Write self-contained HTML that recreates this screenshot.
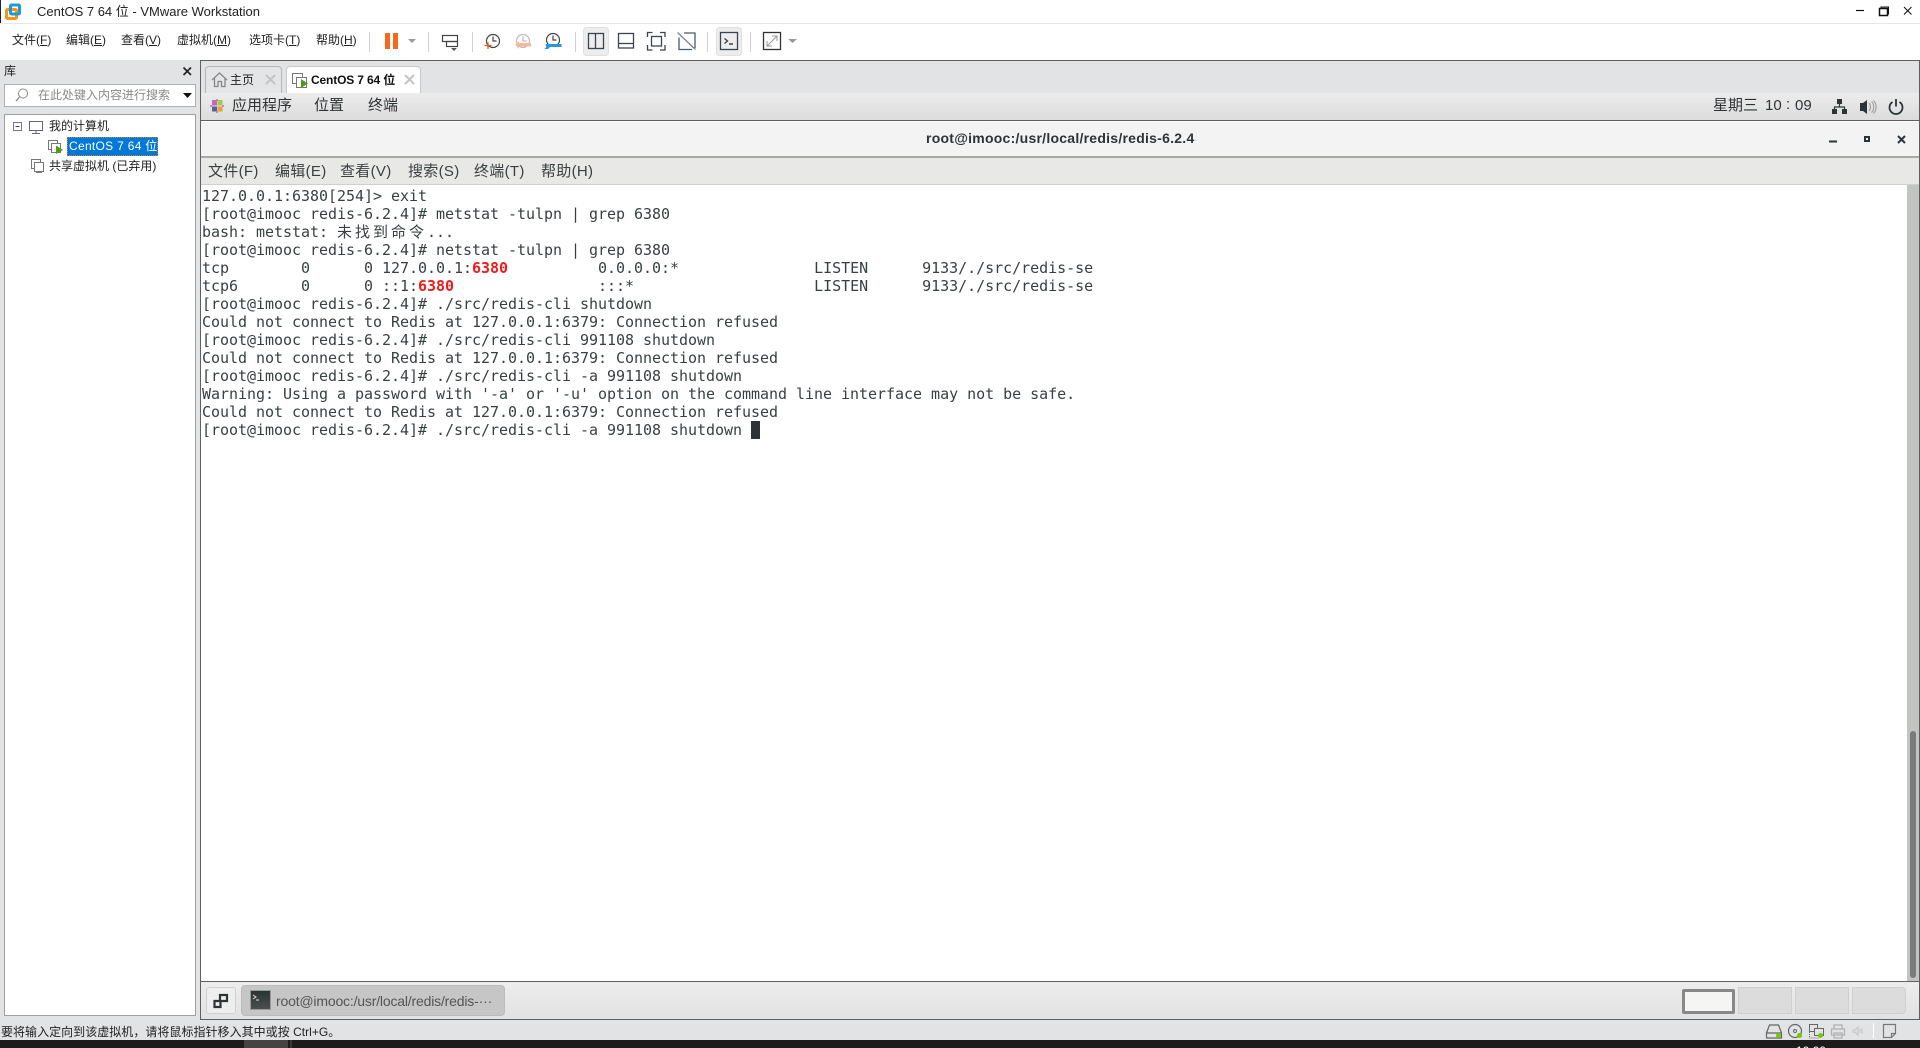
<!DOCTYPE html>
<html><head><meta charset="utf-8"><style>
*{box-sizing:border-box;margin:0;padding:0}
html,body{width:1920px;height:1048px;overflow:hidden;background:#e2e3e5}
body{position:relative;font-family:"Liberation Sans","Noto Sans CJK SC",sans-serif;color:#222}
.a{position:absolute}
.t{position:absolute;white-space:pre;line-height:18px}
.m{font-size:12px;color:#222;top:31px}
.m u{text-decoration:underline}
.g{font-size:15px;color:#2e3436}
.gm{font-size:15px;color:#3a3f41;top:163px;letter-spacing:.3px}
.sep{position:absolute;width:1px;background:#d0d0d0;top:32px;height:20px}
svg{position:absolute;overflow:visible}
#term{position:absolute;left:202px;top:187px;font:15px/18px "DejaVu Sans Mono","Noto Sans CJK SC",monospace;letter-spacing:-.03px;color:#3a4042;white-space:pre}
#term b{color:#f01c1c}
#term i{font-style:normal;letter-spacing:3px}
</style></head><body>
<!-- title bar -->
<div class="a" style="left:0;top:0;width:1920px;height:60px;background:#fff"></div>
<div class="a" style="left:0;top:23px;width:1920px;height:1px;background:#e6e6e6"></div>
<div class="a" style="left:0;top:0;width:1px;height:23px;background:#222"></div>
<svg style="left:0;top:0" width="24" height="24"><rect x="6.500" y="9.500" width="10" height="9" fill="none" stroke="#f7941d" stroke-width="3" rx="1"/><rect x="10.500" y="5" width="9" height="9" fill="none" stroke="#1e9bd7" stroke-width="3" rx="1"/></svg>
<div class="t" style="left:37px;top:3px;font-size:13px;color:#222">CentOS 7 64 位 - VMware Workstation</div>
<svg style="left:1850px;top:0" width="70" height="24" fill="none" stroke="#111"><path d="M6 10.500h8" stroke-width="1.200"/><rect x="29.500" y="8.500" width="8" height="7" stroke-width="1.500"/><path d="M31 8v-1h7.500v7h-1" stroke-width="1"/><path d="M54 7l7.500 7.500M61.500 7L54 14.500" stroke-width="1"/></svg>
<!-- menus -->
<div class="t m" style="left:12px">文件(<u>F</u>)</div>
<div class="t m" style="left:66px">编辑(<u>E</u>)</div>
<div class="t m" style="left:121px">查看(<u>V</u>)</div>
<div class="t m" style="left:177px">虚拟机(<u>M</u>)</div>
<div class="t m" style="left:249px">选项卡(<u>T</u>)</div>
<div class="t m" style="left:316px">帮助(<u>H</u>)</div>
<div class="sep" style="left:369px"></div><div class="sep" style="left:428px"></div><div class="sep" style="left:472px"></div><div class="sep" style="left:575px"></div><div class="sep" style="left:707px"></div><div class="sep" style="left:750px"></div>
<div class="a" style="left:385px;top:33px;width:5px;height:16px;background:#f4691f"></div>
<div class="a" style="left:393px;top:33px;width:5px;height:16px;background:#f4691f"></div>
<svg style="left:0;top:0" width="1000" height="60" fill="none">
<path d="M408 39h8l-4 4z" fill="#999"/><path d="M788 39h9l-4.500 4z" fill="#999"/>
<g stroke="#444" stroke-width="1.200"><rect x="442.500" y="35.500" width="15" height="6"/><rect x="446.500" y="41.500" width="11" height="5"/></g><path d="M451 48h6l-3 3z" fill="#555"/>
<g stroke="#444" stroke-width="1.200"><circle cx="493" cy="41" r="6.500"/><path d="M493 36.500v4.500h3.500"/></g><path d="M488 42.500v6.500M484.500 45.500h7" stroke="#f0541e" stroke-width="1.300"/>
<g stroke="#bbb" stroke-width="1.200"><circle cx="523" cy="41" r="6.500"/><path d="M523 36.500v4.500h3.500"/></g><path d="M519 43h12v3.500h-12l0 2.500-3.500-4 3.500-4z" fill="#fbb797"/>
<g stroke="#444" stroke-width="1.200"><circle cx="553" cy="40" r="6.500"/><path d="M553 35.500v4.500h3.500"/></g><path d="M546 44h15.500v3h-11.500l-2 2h-3.500l2-2.500-1-1z" fill="#2597dd"/>
<rect x="583.500" y="27.500" width="25" height="28" rx="3" fill="#ededed" stroke="#e0e0e0"/>
<rect x="716.500" y="27.500" width="25" height="28" rx="3" fill="#ededed" stroke="#e0e0e0"/>
<g stroke="#3c4450" stroke-width="1.300"><rect x="588.500" y="33.500" width="15" height="15"/><path d="M595.500 33v16"/><rect x="618.500" y="33.500" width="15" height="14.500"/><path d="M618 43.500h16"/>
<path d="M647.500 37v-4.500h5M660 32.500h5v4.500M665 45v5h-5M652.500 50h-5v-5"/><rect x="651.500" y="36.500" width="10" height="9.500"/>
<path d="M684 33h11v15M692 49.500h-13v-12" stroke="#4a5a6a"/><path d="M677.500 32.500l18 17" stroke="#7a8490"/>
<rect x="720.500" y="32.500" width="17" height="17"/><path d="M724.500 38.500l3 2.500-3 2.500M729 44h4" stroke-width="1.400"/>
<rect x="763.500" y="32.500" width="17" height="17" stroke="#333"/></g>
<path d="M767 46l10-10M772 36h5v5M767 41v5h5" stroke="#999" stroke-width="1"/>
</svg>
<!-- left panel -->
<div class="t" style="left:4px;top:62px;font-size:12px;color:#222">库</div>
<svg style="left:182px;top:66px" width="12" height="12"><path d="M1.500 1.500l7.500 7.500M9 1.500L1.500 9" stroke="#222" stroke-width="1.600" fill="none"/></svg>
<div class="a" style="left:4px;top:84px;width:192px;height:23px;background:#fff;border:1px solid #b0b0b0"></div>
<svg style="left:14px;top:87px" width="16" height="16" fill="none"><circle cx="9" cy="6.500" r="4.500" stroke="#888"/><path d="M5.500 10L2 14" stroke="#888" stroke-width="1.300"/></svg>
<div class="t" style="left:38px;top:86px;font-size:12px;color:#8a8a8a">在此处键入内容进行搜索</div>
<svg style="left:183px;top:93px" width="9" height="6"><path d="M0 0h9l-4.500 5z" fill="#111"/></svg>
<div class="a" style="left:4px;top:114px;width:192px;height:902px;background:#fff;border:1px solid #a0a0a0"></div>
<svg style="left:0;top:110px" width="70" height="70" fill="none">
<rect x="13.500" y="12.500" width="8" height="8" stroke="#778"/><path d="M15.500 16.500h4" stroke="#445"/>
<rect x="29.500" y="11.500" width="13" height="9" stroke="#667"/><path d="M32 23.500h8M36 20.500v3" stroke="#667"/>
<rect x="48.500" y="30.500" width="9" height="9" stroke="#777"/><rect x="51.500" y="33.500" width="9" height="9" fill="#fff" stroke="#777"/><path d="M56 35.500l7 4.500-7 4z" fill="#4f9e12"/>
<rect x="31.500" y="49.500" width="9" height="9" stroke="#777"/><rect x="34.500" y="52.500" width="9" height="9" fill="#fff" stroke="#777"/><path d="M36 62.500h6" stroke="#777"/>
</svg>
<div class="t" style="left:49px;top:117px;font-size:12px;color:#222">我的计算机</div>
<div class="a" style="left:67px;top:137px;width:91px;height:19px;background:#0078d7;border:1px dotted #d08030"></div>
<div class="t" style="left:69px;top:137px;font-size:12px;letter-spacing:.3px;color:#fff">CentOS 7 64 位</div>
<div class="t" style="left:49px;top:157px;font-size:12px;color:#222">共享虚拟机 (已弃用)</div>
<!-- right panel -->
<div class="a" style="left:200px;top:60px;width:1720px;height:960px;background:#e2e3e5;border:1px solid #5f5f5f"></div>
<!-- tabs -->
<div class="a" style="left:205px;top:66px;width:77px;height:27px;background:#e4e5e7;border:1px solid #b5b5b5;border-bottom:0;border-radius:4px 4px 0 0"></div>
<div class="a" style="left:286px;top:66px;width:135px;height:28px;background:#fff;border:1px solid #c8c8c8;border-bottom:0;border-radius:4px 4px 0 0"></div>
<svg style="left:205px;top:66px" width="230" height="28" fill="none">
<path d="M7 14l7.500-7 7.500 7M9.500 12v8.500h3.500v-5h3.500v5h3.500v-8.500" stroke="#888" stroke-width="1.300"/>
<path d="M61 9l9 9M70 9l-9 9" stroke="#c4c4c4" stroke-width="2"/>
<rect x="87.500" y="7.500" width="10" height="10" stroke="#777"/><rect x="91.500" y="11.500" width="10" height="10" fill="#fff" stroke="#777"/><path d="M96 13l7 4.500-7 4.500z" fill="#4f9e12"/>
<path d="M200 9l9 9M209 9l-9 9" stroke="#c4c4c4" stroke-width="2"/>
</svg>
<div class="t" style="left:230px;top:71px;font-size:12px;color:#222">主页</div>
<div class="t" style="left:311px;top:71px;font-size:12px;font-weight:bold;color:#111;letter-spacing:-.15px">CentOS 7 64 位</div>
<!-- gnome panel -->
<div class="a" style="left:201px;top:93px;width:1718px;height:27px;background:linear-gradient(#ececec,#dcdcdc)"></div>
<div class="a" style="left:201px;top:120px;width:1718px;height:1px;background:#5f5f5f"></div>
<svg style="left:209px;top:98px" width="16" height="16"><rect x="3" y="2" width="5" height="5.500" fill="#c66ab0"/><rect x="8.500" y="2" width="5" height="5.500" fill="#a8c850"/><rect x="3" y="8.500" width="5" height="5" fill="#5b5aa8"/><rect x="8.500" y="8.500" width="5" height="5" fill="#e8a030"/><path d="M8 1v2M8 13v2M1 8h2M13 8h2" stroke="#b07ab0" stroke-width="1.500"/></svg>
<div class="t g" style="left:232px;top:97px">应用程序</div>
<div class="t g" style="left:314px;top:97px">位置</div>
<div class="t g" style="left:368px;top:97px">终端</div>
<div class="t g" style="left:1713px;top:97px">星期三</div>
<div class="t g" style="left:1765px;top:97px">10</div>
<div class="t g" style="left:1786px;top:96px">:</div>
<div class="t g" style="left:1795px;top:97px">09</div>
<svg style="left:1830px;top:97px" width="80" height="20" fill="none"><path d="M2 17h5v-5H2zM12 17h5v-5h-5zM7 7h5V2H7z" fill="#2e3436"/><path d="M9.500 7v3M4.500 12v-2h10v2" stroke="#2e3436" stroke-width="1.200"/>
<path d="M30 6h3l4-3v14l-4-3h-3z" fill="#2e3436"/><path d="M39 6c2 2 2 6 0 8M41.500 4.500c3 3 3 8 0 11M43.500 3.500c3.500 4 3.500 9 0 13" stroke="#a0a2a2" stroke-width="1.200"/>
<path d="M62.500 5a6.500 6.500 0 1 0 7 0M66 2v7.500" stroke="#2e3436" stroke-width="1.800"/></svg>
<!-- title bar gnome -->
<div class="a" style="left:201px;top:121px;width:1718px;height:36px;background:#f3f3f3;border-top:1px solid #fff"></div>
<div class="a" style="left:201px;top:156px;width:1718px;height:2px;background:#a8a8a6"></div>
<div class="t" style="left:926px;top:129px;font-size:14px;font-weight:bold;color:#2e3436;letter-spacing:.25px">root@imooc:/usr/local/redis/redis-6.2.4</div>
<svg style="left:1825px;top:130px" width="90" height="20" fill="none"><path d="M4 11.500h8" stroke="#2e3436" stroke-width="2"/><rect x="40" y="7" width="4" height="4" stroke="#2e3436" stroke-width="2"/><path d="M73 6l7 7M80 6l-7 7" stroke="#2e3436" stroke-width="2"/></svg>
<!-- gnome terminal menu -->
<div class="a" style="left:201px;top:158px;width:1718px;height:27px;background:#e8e8e6"></div>
<div class="a" style="left:201px;top:184px;width:1718px;height:1px;background:#cfcfcd"></div>
<div class="t gm" style="left:208px">文件(F)</div>
<div class="t gm" style="left:275px">编辑(E)</div>
<div class="t gm" style="left:340px">查看(V)</div>
<div class="t gm" style="left:408px">搜索(S)</div>
<div class="t gm" style="left:474px">终端(T)</div>
<div class="t gm" style="left:541px">帮助(H)</div>
<!-- terminal -->
<div class="a" style="left:201px;top:185px;width:1718px;height:796px;background:#fff"></div>
<div id="term">127.0.0.1:6380[254]&gt; exit
[root@imooc redis-6.2.4]# metstat -tulpn | grep 6380
bash: metstat: <i>未找到命令</i>...
[root@imooc redis-6.2.4]# netstat -tulpn | grep 6380
tcp        0      0 127.0.0.1:<b>6380</b>          0.0.0.0:*               LISTEN      9133/./src/redis-se
tcp6       0      0 ::1:<b>6380</b>                :::*                    LISTEN      9133/./src/redis-se
[root@imooc redis-6.2.4]# ./src/redis-cli shutdown
Could not connect to Redis at 127.0.0.1:6379: Connection refused
[root@imooc redis-6.2.4]# ./src/redis-cli 991108 shutdown
Could not connect to Redis at 127.0.0.1:6379: Connection refused
[root@imooc redis-6.2.4]# ./src/redis-cli -a 991108 shutdown
Warning: Using a password with '-a' or '-u' option on the command line interface may not be safe.
Could not connect to Redis at 127.0.0.1:6379: Connection refused
[root@imooc redis-6.2.4]# ./src/redis-cli -a 991108 shutdown </div>
<div class="a" style="left:751px;top:421px;width:9px;height:18px;background:#2e3436"></div>
<div class="a" style="left:1907px;top:185px;width:12px;height:796px;background:#c2c4c2"></div>
<div class="a" style="left:1910px;top:731px;width:6px;height:247px;background:#7a7c7c;border-radius:3px"></div>
<!-- bottom panel -->
<div class="a" style="left:201px;top:981px;width:1718px;height:1px;background:#5f5f5f"></div>
<div class="a" style="left:201px;top:982px;width:1718px;height:37px;background:linear-gradient(#ededed,#e2e2e2)"></div>
<div class="a" style="left:206px;top:987px;width:30px;height:27px;background:#eee;border:1px solid #d0d0d0;border-radius:3px"></div>
<svg style="left:214px;top:993px" width="14" height="16"><path d="M0.500 14V8h6v6z M6 2h7v6H6z" fill="none" stroke="#2e3436" stroke-width="2.200"/></svg>
<div class="a" style="left:241px;top:985px;width:264px;height:31px;background:#c6c6c6;border:1px solid #bcbcbc;border-radius:4px"></div>
<div class="a" style="left:250px;top:990px;width:21px;height:20px;background:linear-gradient(#2c3333,#4a5050);border:1px solid #999"></div>
<svg style="left:253px;top:995px" width="10" height="8"><path d="M0 0l3 2-3 2M3 5h3" stroke="#ddd" fill="none"/></svg>
<div class="t" style="left:276px;top:992px;font-size:14px;color:#555;letter-spacing:-.18px">root@imooc:/usr/local/redis/redis-···</div>
<div class="a" style="left:1682px;top:989px;width:53px;height:25px;background:#f5f5f3;border:3px solid #888;border-radius:2px"></div>
<div class="a" style="left:1738px;top:987px;width:54px;height:27px;background:#dcdcdc;border:1px solid #d0d0d0"></div>
<div class="a" style="left:1795px;top:987px;width:54px;height:27px;background:#dcdcdc;border:1px solid #d0d0d0"></div>
<div class="a" style="left:1852px;top:987px;width:54px;height:27px;background:#dcdcdc;border:1px solid #d0d0d0;border-radius:0 4px 4px 0"></div>
<div class="a" style="left:200px;top:1019px;width:1720px;height:1px;background:#5f5f5f"></div>
<!-- status bar -->
<div class="t" style="left:1px;top:1023px;font-size:12px;color:#222;letter-spacing:.03px">要将输入定向到该虚拟机，请将鼠标指针移入其中或按 Ctrl+G。</div>
<svg style="left:1760px;top:1020px" width="160" height="20" fill="none">
<path d="M6.500 13l3-8h9l3 8v5h-15zM7 13h14" stroke="#666" stroke-width="1.200"/><circle cx="18.500" cy="15.500" r="2.500" fill="#78c800"/>
<circle cx="35" cy="11" r="6.500" stroke="#666" stroke-width="1.200"/><circle cx="35" cy="11" r="1.500" stroke="#666"/><circle cx="39.500" cy="15.500" r="2.500" fill="#78c800"/>
<rect x="49.500" y="4.500" width="8" height="7" stroke="#666"/><rect x="54.500" y="8.500" width="9" height="7" fill="#e2e3e5" stroke="#666"/><path d="M49.500 12v6h9" stroke="#666" stroke-dasharray="1 1"/><circle cx="60.500" cy="15.500" r="2.500" fill="#78c800"/>
<path d="M71.500 9h13v6h-13zM74 9V5h8v4M74 13h8v5h-8z" stroke="#b0b0b0" stroke-width="1.200"/>
<path d="M93 10h2l3-3v8l-3-3h-2zM100 9v4M102 8v6" stroke="#c4c4c4"/>
<path d="M113.500 3v15" stroke="#fff" stroke-width="1"/>
<path d="M123.500 4.500h12v9l-4 4h-8zM131.500 17.500v-4h4" stroke="#777" stroke-width="1.200"/>
</svg>
<!-- bottom black -->
<div class="a" style="left:0;top:1040px;width:1920px;height:8px;background:#1c1c1c;overflow:hidden">
<div class="a" style="left:244px;top:0;width:44px;height:8px;background:#444"></div>
<div class="a" style="left:290px;top:0;width:2px;height:8px;background:#3a3a3a"></div>
<div class="t" style="left:1796px;top:4px;font-size:12px;line-height:14px;color:#fff">10:09</div>
</div>
</body></html>
